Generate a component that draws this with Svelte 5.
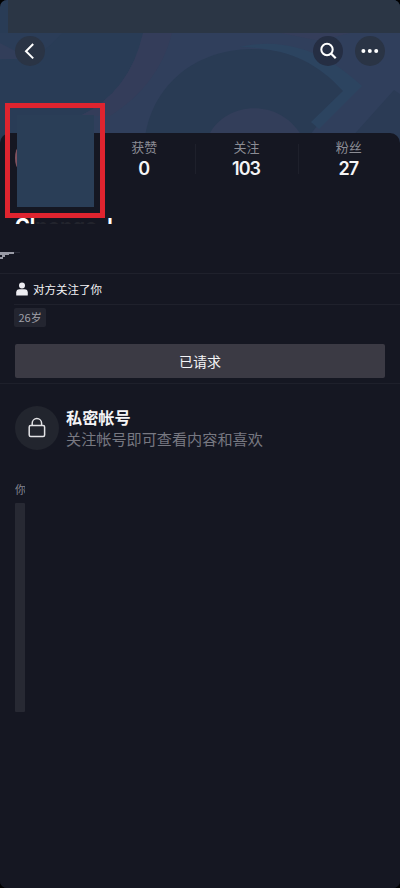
<script lang="ts">
  interface Stat {
    label: string;
    value: number;
  }

  const stats: Stat[] = [
    { label: "获赞", value: 0 },
    { label: "关注", value: 103 },
    { label: "粉丝", value: 27 },
  ];
</script>

<div class="screen">
  <header class="cover">
    <svg class="cover-art" width="400" height="148" viewBox="0 0 400 148" aria-hidden="true">
      <rect width="400" height="148" fill="#293c56" />
      <path d="M0 33H62Q46 52 30 58L0 60Z" fill="#2b3d58" />
      <path d="M0 43Q14 50 30 59H0Z" fill="#323e5a" />
      <path d="M143 33H400V148H0V140L80 116Q130 92 143 33Z" fill="#303f5c" />
      <path d="M0 116H80L94 133V148H0Z" fill="#293c56" />
      <path d="M143 33H172Q159 85 110 116H80Q130 92 143 33Z" fill="#343d5a" />
      <path d="M144 148C146 94 188 49 253 49C292 49 318 63 344 91L300 148Z" fill="#293b54" />
      <path d="M240 47C291 35 332 58 362 86L319 129L311 122L343 91C316 61 286 48 240 47Z" fill="#2c4460" />
      <path d="M209 135C225 102 278 97 301 135Z" fill="#333e5a" />
      <path d="M394 90L400 94V148H342Z" fill="#2b3b55" />
      <path d="M280 33H350L320 41Z" fill="#353e5b" />
    </svg>
    <div class="status-bar"></div>
    <nav class="toolbar">
      <button class="round-btn" aria-label="返回">
        <svg width="30" height="30" viewBox="0 0 30 30" fill="none" aria-hidden="true">
          <path d="M18.2 8L11 15.2L18.2 22.4" stroke="#fff" stroke-width="2" />
        </svg>
      </button>
      <div class="toolbar-right">
        <button class="round-btn search" aria-label="搜索">
          <svg width="30" height="30" viewBox="0 0 30 30" fill="none" aria-hidden="true">
            <circle cx="14" cy="13.5" r="5.7" stroke="#fff" stroke-width="2" />
            <path d="M18.2 17.7L22.7 22.2" stroke="#fff" stroke-width="2.2" />
          </svg>
        </button>
        <button class="round-btn" aria-label="更多">
          <svg width="30" height="30" viewBox="0 0 30 30" fill="#fff" aria-hidden="true">
            <circle cx="8.4" cy="15" r="2" />
            <circle cx="14.8" cy="15" r="2" />
            <circle cx="21.2" cy="15" r="2" />
          </svg>
        </button>
      </div>
    </nav>
  </header>

  <main class="panel">
    <section class="stats">
      {#each stats as stat}
        <div class="stat">
          <span class="stat-label">{stat.label}</span>
          <strong class="stat-value">{stat.value}</strong>
        </div>
      {/each}
    </section>

    <div class="name"><span>Cl</span><span class="hidden-name">nongo</span><span>l</span></div>

    <svg class="id-remnant" width="24" height="10" viewBox="0 0 24 10" aria-hidden="true">
      <path d="M0 1H14V3H9V4H5V6H3V8H0V6H2V4H0Z" fill="#999ba6" />
      <path d="M14 1H20V2H14Z" fill="#292b38" />
    </svg>

    <div class="follow-row">
      <svg width="12" height="14" viewBox="0 0 12 14" fill="#ededf2" aria-hidden="true">
        <circle cx="6" cy="3.5" r="3" />
        <path d="M.2 13V10.6Q.2 7.2 3.6 7.2H8.4Q11.8 7.2 11.8 10.6V13Q11.8 13.5 11.2 13.5H.8Q.2 13.5 .2 13Z" />
      </svg>
      <span>对方关注了你</span>
    </div>

    <div class="tags">
      <span class="tag">26岁</span>
    </div>

    <div class="action">
      <button class="request-btn">已请求</button>
    </div>

    <section class="private">
      <div class="lock">
        <svg width="20" height="22" viewBox="0 0 20 22" fill="none" stroke="#e3e3e6" aria-hidden="true">
          <rect x="2.2" y="8.4" width="15.4" height="11" rx="1.5" stroke-width="1.5" />
          <path d="M5.2 8.3V6.3A4.7 4.7 0 0 1 14.6 6.3V8.3" stroke-width="1.5" />
        </svg>
      </div>
      <div class="private-text">
        <h2>私密帐号</h2>
        <p>关注帐号即可查看内容和喜欢</p>
      </div>
    </section>

    <section class="suggestions">
      <span class="suggestions-title">你</span>
      <div class="suggestion-card"></div>
    </section>
  </main>

  <div class="avatar-sliver"></div>
  <div class="avatar-cover"></div>
  <div class="avatar-frame"></div>
</div>

<style>
  :global(body) {
    margin: 0;
    background: #000;
  }

  .screen {
    position: relative;
    display: flex;
    flex-direction: column;
    width: 400px;
    height: 888px;
    overflow: hidden;
    border-radius: 7px;
    background: #151722;
    color: #f4f4f6;
    font-family: "Noto Sans CJK SC", sans-serif;
  }

  button {
    padding: 0;
    border: none;
    font: inherit;
    color: inherit;
  }

  svg {
    display: block;
  }

  .cover {
    position: relative;
    height: 133px;
    flex-shrink: 0;
  }

  .cover-art {
    position: absolute;
    top: 0;
    left: 0;
  }

  .status-bar {
    position: relative;
    height: 33px;
    margin-left: 8px;
    background: #2b3645;
  }

  .toolbar {
    position: relative;
    display: flex;
    justify-content: space-between;
    padding: 3px 15px 0;
  }

  .toolbar-right {
    display: flex;
    gap: 12px;
  }

  .round-btn {
    width: 30px;
    height: 30px;
    border-radius: 50%;
    background: #2a3445;
  }

  .round-btn.search {
    background: #252e43;
  }

  .panel {
    position: relative;
    flex: 1;
    border-radius: 10px 10px 0 0;
    background: #151722;
  }

  .stats {
    display: flex;
    height: 84px;
    padding-left: 93px;
    box-sizing: border-box;
  }

  .stat {
    position: relative;
    display: flex;
    flex: 1;
    flex-direction: column;
    align-items: center;
    padding-top: 5px;
  }

  .stat + .stat::before {
    content: "";
    position: absolute;
    top: 11px;
    left: 0;
    width: 1px;
    height: 30px;
    background: #1e202b;
  }

  .stat-label {
    font-size: 13px;
    line-height: 18px;
    color: #8b8c94;
  }

  .stat-value {
    margin-top: 2px;
    margin-right: 1px;
    font-family: Inter, sans-serif;
    font-size: 18px;
    font-weight: 600;
    line-height: 22px;
    letter-spacing: -1px;
  }

  /* Only the top edge of the nickname stays visible */
  .name {
    height: 7px;
    padding-left: 15px;
    overflow: hidden;
    font-family: Inter, sans-serif;
    font-size: 20px;
    font-weight: 700;
    line-height: 18px;
    white-space: nowrap;
    color: #fff;
  }

  .hidden-name {
    display: inline-block;
    width: 72px;
    color: #22242d;
  }

  .id-remnant {
    margin-top: 27px;
  }

  .follow-row {
    display: flex;
    align-items: center;
    gap: 5px;
    height: 30px;
    margin-top: 12px;
    padding-left: 16px;
    border-top: 1px solid #1f212c;
    font-size: 11.5px;
  }

  .tags {
    display: flex;
    margin-left: 14px;
    padding-top: 3px;
    border-top: 1px solid #1f212c;
  }

  .tag {
    padding: 0 4.5px;
    border-radius: 2px;
    background: #232530;
    font-size: 11px;
    line-height: 19px;
    color: #a1a2aa;
  }

  .action {
    padding: 17px 15px 5px;
    border-bottom: 1px solid #1e202b;
  }

  .request-btn {
    display: block;
    width: 100%;
    height: 34px;
    border-radius: 2px;
    background: #3b3a44;
    font-size: 14px;
  }

  .private {
    display: flex;
    align-items: center;
    gap: 7px;
    padding: 22px 15px 0;
  }

  .lock {
    display: flex;
    align-items: center;
    justify-content: center;
    width: 44px;
    height: 44px;
    border-radius: 50%;
    background: #22252e;
  }

  .private-text {
    padding-bottom: 2px;
  }

  h2 {
    margin: 0;
    font-size: 16.2px;
    font-weight: 700;
    line-height: 22px;
  }

  p {
    margin: 0;
    font-size: 15.15px;
    line-height: 20px;
    color: #777881;
  }

  .suggestions {
    width: 10px;
    margin: 31px 0 0 15px;
    overflow: hidden;
  }

  .suggestions-title {
    display: block;
    font-size: 11px;
    line-height: 16px;
    color: #858690;
  }

  .suggestion-card {
    height: 209px;
    margin-top: 6px;
    border-radius: 1px;
    background: #272933;
  }

  .avatar-sliver {
    position: absolute;
    top: 147px;
    left: 15px;
    width: 8px;
    height: 22px;
    border-radius: 50%;
    background: #80525f;
  }

  .avatar-cover {
    position: absolute;
    top: 115px;
    left: 17px;
    width: 77px;
    height: 92px;
    background: #2a3e57;
  }

  .avatar-frame {
    position: absolute;
    top: 103px;
    left: 5px;
    width: 100px;
    height: 115px;
    box-sizing: border-box;
    border: 5px solid #df242f;
  }
</style>
